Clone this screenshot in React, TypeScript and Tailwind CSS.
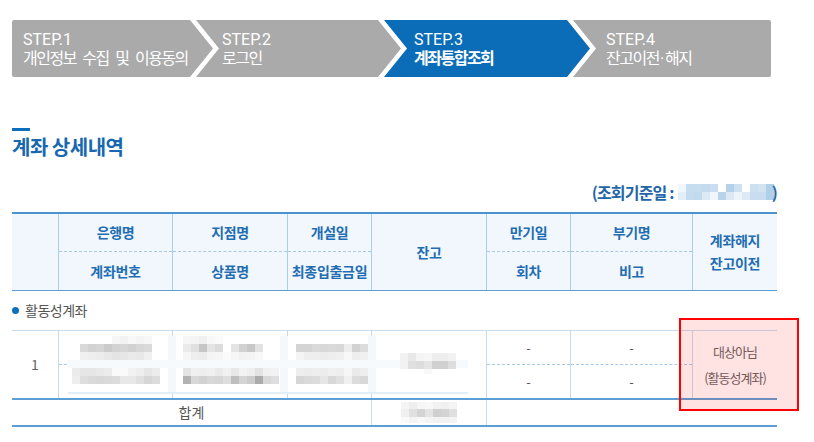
import type { ReactNode } from "react"

const FONT = "font-['Noto_Sans_CJK_KR','Noto_Sans',sans-serif]"

type PixRow = { x: number; y: number; c: string[]; w?: number; h?: number }

// pixelated (masked) content, drawn as blocks
function Pixels({ w, h, rows, children }: { w: number; h: number; rows: PixRow[]; children?: ReactNode }) {
  return (
    <svg width={w} height={h} viewBox={`0 0 ${w} ${h}`} className="block" shapeRendering="crispEdges">
      {children}
      {rows.map((r, i) =>
        r.c.map((c, j) => (
          <rect key={`${i}-${j}`} x={r.x + j * (r.w ?? 8)} y={r.y} width={r.w ?? 8} height={r.h ?? 8} fill={c} />
        )),
      )}
    </svg>
  )
}

const steps = [
  {
    no: "STEP.1",
    label: <>개인정보 수집 및 이용동의</>,
    cls: "w-[201px] pl-[11px] bg-[#aaaaaa] rounded-l-[2px] [clip-path:polygon(0_0,calc(100%_-_23px)_0,100%_50%,calc(100%_-_23px)_100%,0_100%)]",
  },
  {
    no: "STEP.2",
    label: <>로그인</>,
    cls: "w-[205px] pl-[26px] ml-[-17px] bg-[#aaaaaa] [clip-path:polygon(0_0,calc(100%_-_23px)_0,100%_50%,calc(100%_-_23px)_100%,0_100%,23px_50%)]",
  },
  {
    no: "STEP.3",
    label: <>계좌통합조회</>,
    active: true,
    cls: "w-[206px] pl-[30px] ml-[-17px] bg-[#0b6db8] [clip-path:polygon(0_0,calc(100%_-_23px)_0,100%_50%,calc(100%_-_23px)_100%,0_100%,23px_50%)]",
  },
  {
    no: "STEP.4",
    label: (
      <>
        잔고이전<span className="tracking-normal px-[1px]">·</span>해지
      </>
    ),
    cls: "w-[198px] pl-[33px] ml-[-17px] bg-[#aaaaaa] rounded-r-[2px] [clip-path:polygon(0_0,100%_0,100%_100%,0_100%,23px_50%)]",
  },
]

const headCols = [
  { w: "w-[46px]", top: null, bottom: null, single: null },
  { w: "w-[114px]", top: "은행명", bottom: "계좌번호" },
  { w: "w-[115px]", top: "지점명", bottom: "상품명" },
  { w: "w-[84px]", top: "개설일", bottom: "최종입출금일" },
  { w: "w-[115px]", single: ["잔고"] },
  { w: "w-[84px]", top: "만기일", bottom: "회차" },
  { w: "w-[122px]", top: "부기명", bottom: "비고" },
  { w: "w-[85px]", single: ["계좌해지", "잔고이전"] },
]

const dateRows: PixRow[] = [
  { x: 0, y: 0, c: ["#f0f6fb", "#c6dcef", "#c6dcef", "#c4dbee", "#c8ddf0", "#ffffff", "#b3d1e9", "#cde1f1", "#ffffff", "#cce0f0", "#d2e4f2", "#b0cfe8"] },
  { x: 0, y: 8, c: ["#e4eef8", "#c4dcef", "#c2daee", "#dceaf6", "#f0f6fb", "#b8d4eb", "#dce9f5", "#edf4fa", "#dde9f5", "#c8ddf0", "#c8ddf0", "#b0cfe8"] },
]

const blurRows: PixRow[] = [
  // 은행명 / 계좌번호
  { x: 44, y: 0, c: ["#f6f6f6", "#f2f2f2", "#f8f8f8", "#f4f4f4", "#f7f7f7"] },
  { x: 12, y: 8, c: ["#d9d9d9", "#d2d2d2", "#d5d5d5", "#cbcbcb", "#d3d3d3", "#d6d6d6", "#d1d1d1", "#d7d7d7", "#dadada"] },
  { x: 12, y: 16, c: ["#f0f0f0", "#eeeeee", "#ececec", "#e8e8e8", "#e4e4e4", "#e6e6e6", "#eaeaea", "#e8e8e8", "#f0f0f0"] },
  { x: 4, y: 32, c: ["#ebebeb", "#e6e6e6", "#e6e6e6", "#e9e9e9", "#ececec", "#fafafa", "#fafafa", "#f2f2f2", "#eeeeee", "#e6e6e6", "#ececec"] },
  { x: 4, y: 40, c: ["#eeeeee", "#dedede", "#dadada", "#d8d8d8", "#dadada", "#dcdcdc", "#e8e8e8", "#e8e8e8", "#e0e0e0", "#d6d6d6", "#dcdcdc"] },
  // 지점명 / 상품명
  { x: 115, y: 0, c: ["#f6f6f6", "#f4f4f4", "#f0f0f0", "#f8f8f8", "#fafafa"] },
  { x: 115, y: 8, c: ["#eaeaea", "#e0e0e0", "#c6c6c6", "#e4e4e4", "#dcdcdc", "#ffffff", "#e4e4e4", "#d2d2d2", "#c8c8c8", "#e2e2e2"] },
  { x: 115, y: 16, c: ["#f6f6f6", "#eeeeee", "#ececec", "#f4f4f4", "#f6f6f6", "#fafafa", "#f6f6f6", "#f2f2f2", "#f4f4f4", "#f8f8f8"] },
  { x: 115, y: 32, c: ["#e4e4e4", "#f0f0f0", "#eeeeee", "#f0f0f0", "#eaeaea", "#f0f0f0", "#e8e8e8", "#f2f2f2", "#eeeeee", "#e2e2e2", "#f0f0f0", "#f2f2f2"] },
  { x: 115, y: 40, c: ["#b2b2b2", "#d8d8d8", "#d2d2d2", "#d8d8d8", "#d6d6d6", "#dedede", "#bebebe", "#d4d4d4", "#cccccc", "#ababab", "#d8d8d8", "#dedede"] },
  // 개설일 / 최종입출금일
  { x: 228, y: 8, c: ["#d4d4d4", "#d4d4d4", "#dadada", "#d8d8d8", "#dadada", "#d8d8d8", "#ededed", "#d2d2d2", "#dcdcdc"] },
  { x: 228, y: 16, c: ["#f4f4f4", "#eeeeee", "#eeeeee", "#ececec", "#eeeeee", "#f0f0f0", "#f8f8f8", "#eeeeee", "#f0f0f0"] },
  { x: 228, y: 32, c: ["#eeeeee", "#ececec", "#eeeeee", "#ececec", "#f0f0f0", "#eeeeee", "#f6f6f6", "#eaeaea", "#eeeeee"] },
  { x: 228, y: 40, c: ["#d6d6d6", "#dadada", "#dcdcdc", "#e6e6e6", "#d8d8d8", "#e0e0e0", "#f0f0f0", "#dcdcdc", "#d8d8d8"] },
  // 잔고
  { x: 332, y: 17, c: ["#f2f2f2", "#e8e8e8", "#f4f4f4", "#f6f6f6", "#eeeeee", "#eeeeee", "#f2f2f2"] },
  { x: 332, y: 25, c: ["#f2f2f2", "#dfdfdf", "#dcdcdc", "#e4e4e4", "#d0d0d0", "#d0d0d0", "#dedede"] },
  { x: 332, y: 33, h: 5, c: ["#ffffff", "#ffffff", "#ffffff", "#f8f8f8", "#ffffff", "#ffffff", "#ffffff"] },
]

const sumRows: PixRow[] = [
  { x: 0, y: 0, h: 7, c: ["#f4f4f4", "#eeeeee", "#f6f6f6", "#f8f8f8", "#f2f2f2", "#f0f0f0", "#f4f4f4"] },
  { x: 0, y: 7, h: 8, c: ["#f0f0f0", "#e0e0e0", "#d4d4d4", "#e4e4e4", "#d0d0d0", "#d4d4d4", "#e0e0e0"] },
  { x: 0, y: 15, h: 6, c: ["#fafafa", "#f4f4f4", "#f8f8f8", "#f4f4f4", "#f2f2f2", "#f2f2f2", "#f4f4f4"] },
]

function HeadLabel({ children }: { children: ReactNode }) {
  return <span className="text-[14px] font-bold tracking-[-0.3px] text-[#1f6db3]">{children}</span>
}

export default function App() {
  return (
    <div className={`${FONT} w-[814px] h-[442px] bg-white pl-[12px] pt-[20px] overflow-hidden`}>
      {/* steps */}
      <div className="flex w-[759px] h-[57px] font-['Roboto','Noto_Sans_CJK_KR',sans-serif]">
        {steps.map((s) => (
          <div key={s.no} className={`${s.cls} flex flex-col justify-center text-white shrink-0`}>
            <span className="text-[16px] leading-[19px]">{s.no}</span>
            <span className={`text-[16px] leading-[19px] tracking-[-1.5px] [word-spacing:4px] ${s.active ? "font-bold" : ""}`}>
              {s.label}
            </span>
          </div>
        ))}
      </div>

      {/* title */}
      <div className="mt-[51px] w-[18px] h-[3px] bg-[#0b6fbd]" />
      <h2 className="mt-[4px] text-[20px] leading-[24px] font-bold tracking-[-0.5px] text-[#1768b0]">계좌 상세내역</h2>

      <div className="w-[765px] mt-[23px] h-[20px] flex justify-end items-center text-[16px] font-bold text-[#2266a8] tracking-[-0.8px]">
        <span>(조회기준일 :</span>
        <span className="ml-[4px]">
          <Pixels w={96} h={16} rows={dateRows} />
        </span>
        <span className="ml-[-2px]">)</span>
      </div>

      {/* table */}
      <div className="relative mt-[10px] w-[765px]">
        <div className="flex bg-[#f1f7fc] border-t-2 border-t-[#4b93cd] border-b border-b-[#5d9fd5]">
          {headCols.map((c, i) => (
            <div key={i} className={`${c.w} h-[76px] shrink-0 ${i > 0 ? "border-l border-l-[#a6cff2]" : ""}`}>
              {c.top ? (
                <div className="flex flex-col">
                  <div className="h-[38px] flex items-center justify-center border-b border-dashed border-[#a9c8e4]">
                    <HeadLabel>{c.top}</HeadLabel>
                  </div>
                  <div className="h-[38px] flex items-center justify-center">
                    <HeadLabel>{c.bottom}</HeadLabel>
                  </div>
                </div>
              ) : c.single ? (
                <div className="h-full flex flex-col items-center justify-center leading-[23px]">
                  {c.single.map((t) => (
                    <HeadLabel key={t}>{t}</HeadLabel>
                  ))}
                </div>
              ) : null}
            </div>
          ))}
        </div>

        <div className="h-[39px] flex items-center gap-[6px] text-[14px] text-[#555] tracking-[-0.5px]">
          <span className="w-[7px] h-[7px] rounded-full bg-[#0b6fbd]" />
          <span>활동성계좌</span>
        </div>

        {/* account row */}
        <div className="flex border-t border-t-[#c6dcec] text-[#555]">
          <div className="w-[46px] h-[67px] shrink-0 flex items-center justify-center text-[14px] text-[#666]">1</div>
          {["w-[114px]", "w-[115px]", "w-[84px]"].map((w) => (
            <div key={w} className={`${w} shrink-0 border-l border-l-[#c6dcec] flex flex-col`}>
              <div className="h-[34px] border-b border-dashed border-[#a9c8e4]" />
              <div className="h-[33px]" />
            </div>
          ))}
          <div className="w-[115px] shrink-0 border-l border-l-[#c6dcec]" />
          {["w-[84px]", "w-[122px]"].map((w) => (
            <div key={w} className={`${w} shrink-0 border-l border-l-[#c6dcec] flex flex-col text-[13px]`}>
              <div className="h-[34px] flex items-center justify-center border-b border-dashed border-[#a9c8e4]">-</div>
              <div className="h-[33px] flex items-center justify-center">-</div>
            </div>
          ))}
          <div className="w-[85px] shrink-0 border-l border-l-[#c6dcec] flex flex-col items-center justify-center text-[13px] leading-[26px] tracking-[-1px] text-[#666]">
            <span>대상아님</span>
            <span>(활동성계좌)</span>
          </div>
        </div>

        {/* total row */}
        <div className="flex border-t-2 border-t-[#5d9fd5] border-b-2 border-b-[#5d9fd5] h-[29px]">
          <div className="w-[359px] shrink-0 flex items-center justify-center text-[14px] text-[#555]">합계</div>
          <div className="w-[115px] shrink-0 border-l border-l-[#c6dcec] flex items-center justify-center">
            <Pixels w={56} h={21} rows={sumRows} />
          </div>
          <div className="w-[291px] shrink-0 border-l border-l-[#c6dcec]" />
        </div>

        {/* masked account data */}
        <div className="absolute left-[56px] top-[124px]">
          <Pixels w={400} h={58} rows={blurRows}>
            <rect x={0} y={0} width={400} height={58} fill="#ffffff" />
            <rect x={100} y={0} width={8} height={56} fill="#f3f8fd" />
            <rect x={212} y={0} width={8} height={56} fill="#f3f8fd" />
            <rect x={300} y={0} width={8} height={56} fill="#f3f8fd" />
            <rect x={0} y={24} width={400} height={8} fill="#f6fafd" />
            <rect x={0} y={56} width={400} height={2} fill="#e2eef8" />
          </Pixels>
        </div>

        {/* highlight box */}
        <div className="absolute left-[667px] top-[106px] w-[120px] h-[93px] border-2 border-[#ff0000] bg-[rgba(255,0,0,0.11)]" />
      </div>
    </div>
  )
}
